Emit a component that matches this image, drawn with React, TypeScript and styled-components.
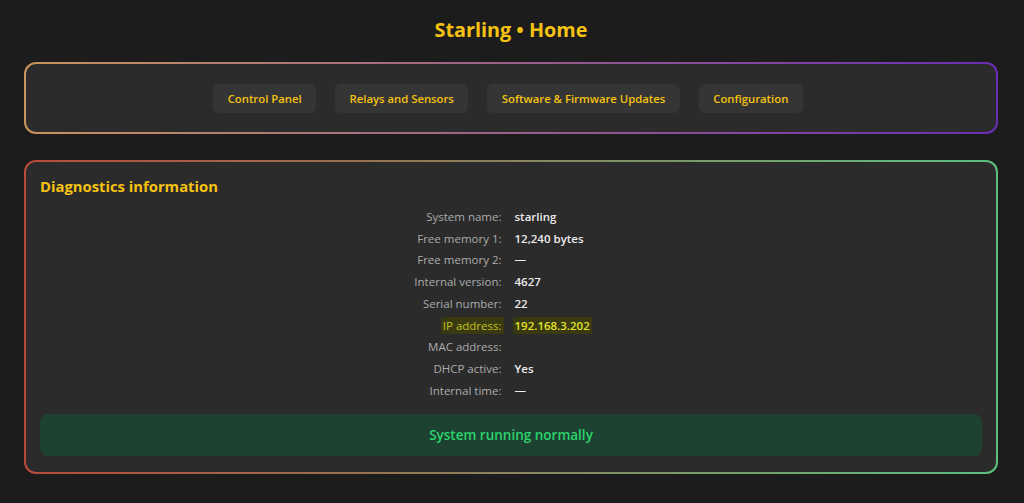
import styled, { createGlobalStyle } from 'styled-components';

const GlobalStyle = createGlobalStyle`
    body {
        margin: 0;
        background: #1c1c1c;
        font-family: "Open Sans", "Noto Sans", sans-serif;
        color: #e8e8e8;
    }
`;

const Page = styled.main`
    display: flex;
    flex-direction: column;
    gap: 26px;
    padding: 16px 26px 30px 24px;
`;

const Title = styled.h1`
    margin: 0 0 -7px;
    text-align: center;
    font-size: 19.8px;
    line-height: 27px;
    font-weight: 700;
    color: #f5c211;
`;

const Card = styled.section<{ $from: string; $to: string }>`
    border: 2px solid transparent;
    border-radius: 12px;
    background:
        linear-gradient(#2b2b2b, #2b2b2b) padding-box,
        linear-gradient(to right, ${p => p.$from}, ${p => p.$to}) border-box;
`;

const NavCard = styled(Card)`
    padding: 20px 20px 19px;
`;

const NavList = styled.ul`
    display: flex;
    justify-content: center;
    gap: 19px;
    list-style: none;
    margin: 0;
    padding: 0 6px 0 0;
`;

const NavButton = styled.a`
    display: block;
    padding: 6px 14.5px;
    border-radius: 6px;
    background: #353535;
    color: #f5c211;
    font-size: 11.3px;
    line-height: 17px;
    font-weight: 600;
    text-decoration: none;
`;

const InfoCard = styled(Card)`
    padding: 14px 14px 16px;
`;

const Heading = styled.h2`
    margin: 0 0 12px;
    font-size: 14.8px;
    line-height: 20px;
    font-weight: 700;
    color: #f5c211;
`;

const InfoGrid = styled.dl`
    display: grid;
    grid-template-columns: 1fr 1fr;
    column-gap: 9px;
    row-gap: 4px;
    margin: 0 0 15px;
    padding-right: 6px;
    font-size: 11.5px;
    line-height: 17.7px;
`;

const Label = styled.dt<{ $mark?: boolean }>`
    justify-self: end;
    padding: 0 2px;
    color: ${p => (p.$mark ? '#c2c21c' : '#ababab')};
    background: ${p => (p.$mark ? '#3a3a12' : 'transparent')};
`;

const Value = styled.dd<{ $mark?: boolean }>`
    justify-self: start;
    margin: 0;
    padding: 0 2px;
    min-height: 17.7px;
    font-weight: 600;
    color: ${p => (p.$mark ? '#e3e32c' : '#ececec')};
    background: ${p => (p.$mark ? '#3a3a12' : 'transparent')};
`;

const Status = styled.div`
    padding: 12px;
    border-radius: 8px;
    background: #1d4231;
    color: #2bd46c;
    text-align: center;
    font-size: 13.5px;
    line-height: 18px;
    font-weight: 600;
`;

const links = ['Control Panel', 'Relays and Sensors', 'Software & Firmware Updates', 'Configuration'];

const rows: { label: string; value: string; mark?: boolean }[] = [
    { label: 'System name:', value: 'starling' },
    { label: 'Free memory 1:', value: '12,240 bytes' },
    { label: 'Free memory 2:', value: '—' },
    { label: 'Internal version:', value: '4627' },
    { label: 'Serial number:', value: '22' },
    { label: 'IP address:', value: '192.168.3.202', mark: true },
    { label: 'MAC address:', value: '' },
    { label: 'DHCP active:', value: 'Yes' },
    { label: 'Internal time:', value: '—' },
];

export default function App() {
    return (
        <>
            <GlobalStyle />
            <Page>
                <Title>Starling • Home</Title>
                <NavCard $from="#c9935e" $to="#6a2db5">
                    <nav>
                        <NavList>
                            {links.map(l => (
                                <li key={l}><NavButton href="#">{l}</NavButton></li>
                            ))}
                        </NavList>
                    </nav>
                </NavCard>
                <InfoCard $from="#b84a3c" $to="#5cbf7e">
                    <Heading>Diagnostics information</Heading>
                    <InfoGrid>
                        {rows.map(r => [
                            <Label key={r.label} $mark={r.mark}>{r.label}</Label>,
                            <Value key={r.label + '-v'} $mark={r.mark}>{r.value}</Value>,
                        ])}
                    </InfoGrid>
                    <Status>System running normally</Status>
                </InfoCard>
            </Page>
        </>
    );
}
